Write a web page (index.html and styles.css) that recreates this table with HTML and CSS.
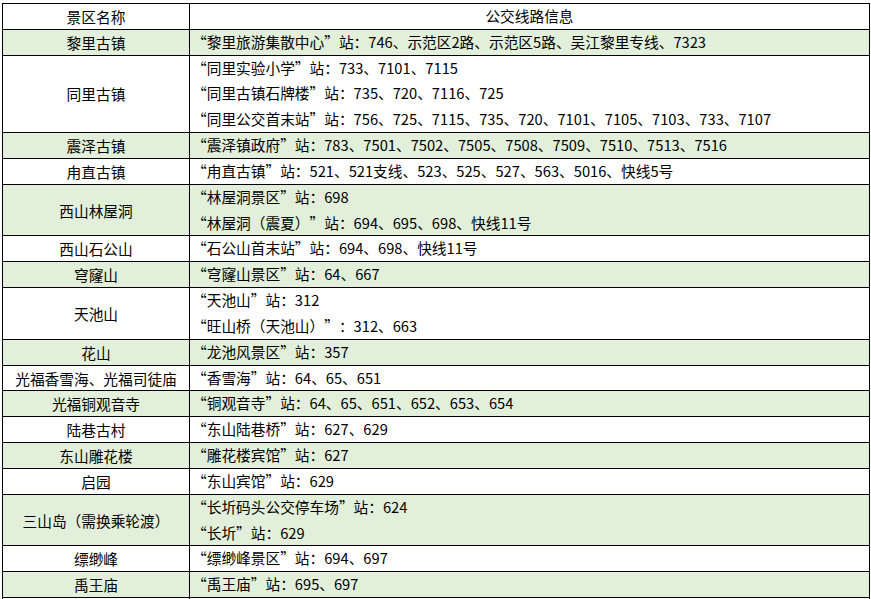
FILE: index.html
```html
<!DOCTYPE html>
<html lang="zh-CN">
<head>
<meta charset="utf-8">
<title>景区公交线路信息</title>
<link rel="stylesheet" href="styles.css">
</head>
<body>
<div class="page">
<table class="bus">
  <colgroup><col class="c-name"><col class="c-info"></colgroup>
  <thead>
    <tr><th class="name">景区名称</th><th class="head-info"><div class="ln">公交线路信息</div></th></tr>
  </thead>
  <tbody>
    <tr class="g"><td class="name">黎里古镇</td><td class="info"><div class="ln"><span class="qo">“</span>黎里旅游集散中心<span class="qc">”</span>站：746、示范区2路、示范区5路、吴江黎里专线、7323</div></td></tr>
    <tr><td class="name">同里古镇</td><td class="info"><div class="ln"><span class="qo">“</span>同里实验小学<span class="qc">”</span>站：733、7101、7115</div><div class="ln"><span class="qo">“</span>同里古镇石牌楼<span class="qc">”</span>站：735、720、7116、725</div><div class="ln"><span class="qo">“</span>同里公交首末站<span class="qc">”</span>站：756、725、7115、735、720、7101、7105、7103、733、7107</div></td></tr>
    <tr class="g"><td class="name">震泽古镇</td><td class="info"><div class="ln"><span class="qo">“</span>震泽镇政府<span class="qc">”</span>站：783、7501、7502、7505、7508、7509、7510、7513、7516</div></td></tr>
    <tr><td class="name">甪直古镇</td><td class="info"><div class="ln"><span class="qo">“</span>甪直古镇<span class="qc">”</span>站：521、521支线、523、525、527、563、5016、快线5号</div></td></tr>
    <tr class="g"><td class="name">西山林屋洞</td><td class="info"><div class="ln"><span class="qo">“</span>林屋洞景区<span class="qc">”</span>站：698</div><div class="ln"><span class="qo">“</span>林屋洞（震夏）<span class="qc">”</span>站：694、695、698、快线11号</div></td></tr>
    <tr><td class="name">西山石公山</td><td class="info"><div class="ln"><span class="qo">“</span>石公山首末站<span class="qc">”</span>站：694、698、快线11号</div></td></tr>
    <tr class="g"><td class="name">穹窿山</td><td class="info"><div class="ln"><span class="qo">“</span>穹窿山景区<span class="qc">”</span>站：64、667</div></td></tr>
    <tr><td class="name">天池山</td><td class="info"><div class="ln"><span class="qo">“</span>天池山<span class="qc">”</span>站：312</div><div class="ln"><span class="qo">“</span>旺山桥（天池山）<span class="qc">”</span>：312、663</div></td></tr>
    <tr class="g"><td class="name">花山</td><td class="info"><div class="ln"><span class="qo">“</span>龙池风景区<span class="qc">”</span>站：357</div></td></tr>
    <tr><td class="name">光福香雪海、光福司徒庙</td><td class="info"><div class="ln"><span class="qo">“</span>香雪海<span class="qc">”</span>站：64、65、651</div></td></tr>
    <tr class="g"><td class="name">光福铜观音寺</td><td class="info"><div class="ln"><span class="qo">“</span>铜观音寺<span class="qc">”</span>站：64、65、651、652、653、654</div></td></tr>
    <tr><td class="name">陆巷古村</td><td class="info"><div class="ln"><span class="qo">“</span>东山陆巷桥<span class="qc">”</span>站：627、629</div></td></tr>
    <tr class="g"><td class="name">东山雕花楼</td><td class="info"><div class="ln"><span class="qo">“</span>雕花楼宾馆<span class="qc">”</span>站：627</div></td></tr>
    <tr><td class="name">启园</td><td class="info"><div class="ln"><span class="qo">“</span>东山宾馆<span class="qc">”</span>站：629</div></td></tr>
    <tr class="g"><td class="name">三山岛（需换乘轮渡）</td><td class="info"><div class="ln"><span class="qo">“</span>长圻码头公交停车场<span class="qc">”</span>站：624</div><div class="ln"><span class="qo">“</span>长圻<span class="qc">”</span>站：629</div></td></tr>
    <tr><td class="name">缥缈峰</td><td class="info"><div class="ln"><span class="qo">“</span>缥缈峰景区<span class="qc">”</span>站：694、697</div></td></tr>
    <tr class="g"><td class="name">禹王庙</td><td class="info"><div class="ln"><span class="qo">“</span>禹王庙<span class="qc">”</span>站：695、697</div></td></tr>
    <tr><td class="name">&nbsp;</td><td class="info"><div class="ln">&nbsp;</div></td></tr>
  </tbody>
</table>
</div>
</body>
</html>
```
FILE: styles.css
```css
html, body {
  margin: 0;
  padding: 0;
  background: #ffffff;
}
body {
  font-family: "Noto Sans CJK SC", "Microsoft YaHei", sans-serif;
  font-size: 14.7px;
  color: #000000;
  overflow: hidden;
  height: 599px;
}
.page {
  padding: 3px 0 0 2px;
}
.bus {
  border-collapse: collapse;
  table-layout: fixed;
  width: 867px;
}
.c-name { width: 187px; }
.c-info { width: 680px; }
.bus th, .bus td {
  border: 1px solid #000000;
  padding: 0;
  font-weight: normal;
  vertical-align: middle;
}
.name {
  text-align: center;
  white-space: nowrap;
}
.info {
  text-align: left;
  padding-left: 2px !important;
  white-space: nowrap;
}
.head-info {
  text-align: center;
}
.qo, .qc {
  display: inline-block;
  width: 14.7px;
}
.qo { text-align: right; }
.qc { text-align: left; }
.ln {
  height: 24.83px;
  line-height: 24.83px;
}
.ln + .ln {
  margin-top: 1px;
}
.g td {
  background: #e2efda;
}
```
